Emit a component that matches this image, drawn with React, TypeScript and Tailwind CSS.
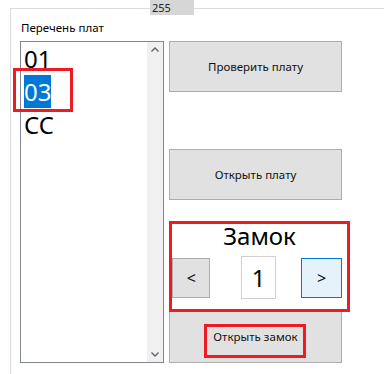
import { useState } from 'react'

// Окно платы: перечень, кнопки и замок

const boards = ['01', '03', 'CC']

function WinButton({ label, className = '' }: { label: string; className?: string }) {
  return (
    <div
      className={`flex items-center justify-center bg-[#e1e1e1] border border-[#adadad] text-[11.5px] text-[#111] ${className}`}
    >
      {label}
    </div>
  )
}

export default function App() {
  const [selected] = useState('03')
  const [lock] = useState(1)

  return (
    <div
      className="relative w-[384px] h-[374px] bg-white overflow-hidden"
      style={{ fontFamily: '"Noto Sans", "Open Sans", sans-serif' }}
    >
      {/* Верхняя линия и вкладка */}
      <div className="flex items-start h-[15px]">
        <div className="ml-[10px] mt-[8px] w-[140px] h-[7px] border-t border-l border-[#dcdcdc]" />
        <div className="w-[44px] h-[15px] bg-[#d6d6d6] pl-[2px] text-[11px] leading-[15px] text-[#222]">255</div>
        <div className="flex-1 mt-[8px] border-t border-[#dcdcdc]" />
      </div>

      {/* Группа */}
      <div className="ml-[10px] h-[359px] border-l border-[#dcdcdc] pl-[9px]">
        <div className="h-[26px] pl-[1px] pt-[5px] text-[11.5px] leading-[16px] text-black">Перечень плат</div>

        <div className="flex">
          {/* Список */}
          <div className="flex w-[144px] h-[322px] border border-[#828790] bg-white">
            <div className="flex-1">
              {boards.map(b => (
                <div key={b} className="h-[33px] pl-[3px] text-[24px] leading-[33px]">
                  <span className={b === selected ? 'inline-block bg-[#0078d7] text-white' : 'text-black'}>{b}</span>
                </div>
              ))}
            </div>
            <div className="w-[16px] bg-[#f0f0f0] flex flex-col items-center justify-between py-[5px]">
              <svg width="8" height="5" viewBox="0 0 8 5">
                <path d="M0.5 4.5 L4 1 L7.5 4.5" fill="none" stroke="#606060" strokeWidth="1.3" />
              </svg>
              <svg width="8" height="5" viewBox="0 0 8 5">
                <path d="M0.5 0.5 L4 4 L7.5 0.5" fill="none" stroke="#606060" strokeWidth="1.3" />
              </svg>
            </div>
          </div>

          {/* Правая колонка */}
          <div className="ml-[5px] w-[173px] flex flex-col">
            <WinButton label="Проверить плату" className="h-[51px]" />
            <WinButton label="Открыть плату" className="h-[51px] mt-[57px]" />

            <div className="mt-[22px] h-[28px] text-center text-[24px] leading-[28px] text-black pl-[8px]">Замок</div>

            <div className="mt-[6px] h-[43px] flex items-center">
              <div className="ml-[3px] w-[39px] h-[40px] flex items-center justify-center bg-[#e1e1e1] border border-[#adadad] text-[16px] text-[#111]">
                &lt;
              </div>
              <div className="ml-[31px] w-[35px] h-[43px] flex items-center justify-center bg-white border border-[#cfcfcf] text-[24px]">
                {lock}
              </div>
              <div className="ml-[25px] w-[41px] h-[40px] shrink-0 flex items-center justify-center bg-[#e5f1fb] border border-[#0078d7] text-[16px] text-[#111]">
                &gt;
              </div>
            </div>

            <WinButton label="Открыть замок" className="h-[52px] mt-[12px]" />
          </div>
        </div>
      </div>

      {/* Красные пометки */}
      <div className="absolute left-[13px] top-[68px] w-[60px] h-[44px] border-[3px] border-[#ed1c24]" />
      <div className="absolute left-[169px] top-[221px] w-[181px] h-[91px] border-[3px] border-[#ed1c24]" />
      <div className="absolute left-[204px] top-[324px] w-[102px] h-[34px] border-[3px] border-[#ed1c24]" />
    </div>
  )
}
